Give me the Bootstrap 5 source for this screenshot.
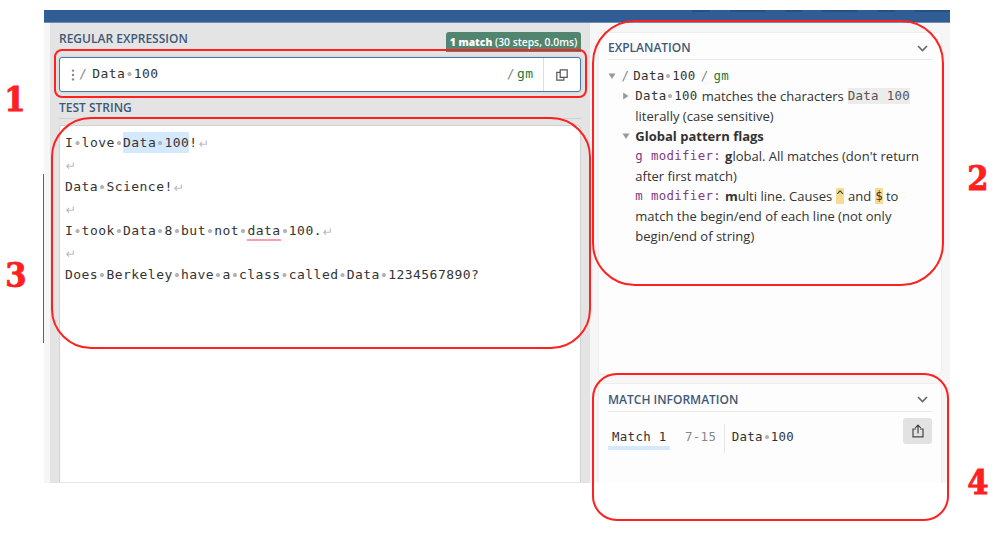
<!DOCTYPE html>
<html lang="en">
<head>
<meta charset="utf-8">
<meta name="viewport" content="width=device-width, initial-scale=1">
<title>Regular expression tester</title>
<link href="https://cdn.jsdelivr.net/npm/bootstrap@5.3.0/dist/css/bootstrap.min.css" rel="stylesheet">
<style>
body{font-family:"Open Sans",sans-serif;font-size:13.03px;line-height:20.05px;color:#333;background:#fff;height:546px;overflow:hidden}
.app{width:906px;height:473px;margin:10px 0 0 44px;background:#f6f6f6}
.topbar{height:13px;background:#2f5d94;border-bottom:1px solid #6d8db3;padding-left:648px;gap:20px}
.topbar i{height:2px;width:23px;background:#29517f}
.topbar i:nth-child(even){width:45px}
.editor{width:540px;margin-left:6px;padding:8px 9px 0 9px;background:#e4e4e4;height:460px}
.side{width:360px;padding:9px 8px 0 8px;height:460px}
.ttl{font-size:12px;font-weight:600;color:#3f5877;line-height:16px;margin:0;white-space:nowrap}
.mono{font-family:"DejaVu Sans Mono",monospace;white-space:pre}
.matches{background:#52856f;color:#fff;font-size:10.3px;font-weight:600;line-height:20px;height:20px;width:135px;border-radius:3px 3px 0 0;margin-top:1px;white-space:nowrap}
.regex{height:35px;margin-top:5px;background:#fff;border:1px solid #4a76ab;border-radius:3px;box-shadow:0 0 3px #bcc8d6}
.regex .mono{font-size:13px;letter-spacing:.45px}
.copybtn{width:37.5px;border-left:1px solid #ddd}
.dot{background:radial-gradient(circle at 50% 54%,#b5b5b5 1.7px,transparent 2.4px)}
.subject{background:#fff;border:1px solid #d2d2d2;border-bottom:0;border-radius:3px 3px 0 0;height:357px;margin-top:6px;padding:5.5px 0 0 5px;font-size:13px;letter-spacing:.455px;line-height:22.15px}
.subject div{height:22.15px}
.hit{background:#d5e9fe;display:inline-block;height:21px;line-height:22.15px;vertical-align:top}
.typo{display:inline-block;height:21px;vertical-align:top;border-bottom:2px solid #fa9db1}
.ret{width:8px;height:7px;margin-left:1px;vertical-align:0}
.panel{background:#fdfdfd;border:1px solid #eee;border-radius:4px;padding:0 9px}
.panel .mono{font-size:12.4px;letter-spacing:.335px;line-height:18px}
.phead{border-bottom:1px solid #e8e8e8}
.tree{padding-top:6px}
.tree>div{height:20.05px;white-space:nowrap}
.ind{padding-left:27.3px}
.panel .lit{background:#ececec;color:#555;height:16px;line-height:16px}
.panel .key{background:#f4dc92;height:16px;line-height:16px}
.tri{width:8px;height:8px;flex:none}
.grn,.panel .grn{color:#237a39}.pur{color:#7d3b86}.gry{color:#888}
.mtab{width:62px;height:26px;border-bottom:4px solid #d5e9fe;padding-left:4px}
.share{width:29px;height:26px;background:#e2e2e2;border-radius:3px;margin-top:-6px}
.note{position:absolute;border:2px solid #ff2020;pointer-events:none}
.num{position:absolute;font:bold 34px/36px "DejaVu Serif Condensed","DejaVu Serif",serif;font-stretch:condensed;-webkit-text-stroke:.8px #ff2020;color:#ff2020;width:24px;text-align:center}
</style>
</head>
<body class="position-relative">
<main class="app overflow-hidden">
  <div class="topbar d-flex"><i></i><i></i><i></i><i></i><i></i><i></i></div>
  <div class="d-flex">
    <section class="editor">
      <div class="d-flex justify-content-between" style="height:21px">
        <h2 class="ttl">REGULAR EXPRESSION</h2>
        <div class="matches text-center"><b>1 match</b> (30 steps, 0.0ms)</div>
      </div>
      <div class="regex d-flex align-items-stretch">
        <div class="d-flex align-items-center flex-grow-1" style="padding-left:11px">
          <svg width="4" height="12" fill="#888"><circle cx="2" cy="1.6" r="1.2"/><circle cx="2" cy="6" r="1.2"/><circle cx="2" cy="10.4" r="1.2"/></svg>
          <span class="mono gry ms-1">/</span><span class="mono" style="margin-left:5px">Data<span class="dot"> </span>100</span>
          <span class="mono gry ms-auto">/</span><span class="mono grn" style="margin:0 9px 0 2px">gm</span>
        </div>
        <div class="copybtn d-flex align-items-center justify-content-center"><svg width="12" height="12" viewBox="0 0 12 12" fill="none" stroke="#555" stroke-width="1.2"><path d="M4.2.8h7v7.6h-7z"/><path d="M4.2 3.4H.8v7.8h7V8.4"/></svg></div>
      </div>
      <h2 class="ttl" style="margin-top:8px;padding-bottom:2px;border-bottom:1px solid #d0d0d0">TEST STRING</h2>
      <div class="subject mono"><div>I<span class="dot"> </span>love<span class="dot"> </span><span class="hit">Data<span class="dot"> </span>100</span>!<svg class="ret" viewBox="0 0 8 7"><use href="#retn"/></svg></div><div><svg class="ret" viewBox="0 0 8 7"><use href="#retn"/></svg></div><div>Data<span class="dot"> </span>Science!<svg class="ret" viewBox="0 0 8 7"><use href="#retn"/></svg></div><div><svg class="ret" viewBox="0 0 8 7"><use href="#retn"/></svg></div><div>I<span class="dot"> </span>took<span class="dot"> </span>Data<span class="dot"> </span>8<span class="dot"> </span>but<span class="dot"> </span>not<span class="dot"> </span><span class="typo">data</span><span class="dot"> </span>100.<svg class="ret" viewBox="0 0 8 7"><use href="#retn"/></svg></div><div><svg class="ret" viewBox="0 0 8 7"><use href="#retn"/></svg></div><div>Does<span class="dot"> </span>Berkeley<span class="dot"> </span>have<span class="dot"> </span>a<span class="dot"> </span>class<span class="dot"> </span>called<span class="dot"> </span>Data<span class="dot"> </span>1234567890?</div></div>
    </section>
    <aside class="side">
      <section class="panel" style="height:343px">
        <div class="phead d-flex align-items-center justify-content-between" style="height:27px;padding-top:4px"><h2 class="ttl">EXPLANATION</h2><svg class="me-1" width="11" height="7" fill="none" stroke="#666" stroke-width="1.6"><path d="M1 1l4.5 4.5L10 1"/></svg></div>
        <div class="tree">
          <div class="d-flex align-items-center"><svg class="tri" fill="#999"><path d="M.5 1.5h7L4 7z"/></svg><span class="mono gry" style="margin-left:5.5px">/</span><span class="mono" style="margin-left:4px">Data<span class="dot"> </span>100</span><span class="mono gry" style="margin-left:5px">/</span><span class="mono grn" style="margin-left:5px">gm</span></div>
          <div class="d-flex align-items-center" style="padding-left:13.5px"><svg class="tri" fill="#999"><path d="M1.2.5v7L6.5 4z"/></svg><span class="mono" style="margin-left:5.8px">Data<span class="dot"> </span>100</span><span style="margin:0 4px">matches the characters</span><span class="mono lit">Data 100</span></div>
          <div class="ind">literally (case sensitive)</div>
          <div class="d-flex align-items-center" style="padding-left:13.5px"><svg class="tri" fill="#999"><path d="M.5 1.5h7L4 7z"/></svg><b style="margin-left:5.8px">Global pattern flags</b></div>
          <div class="ind d-flex align-items-center"><span class="mono pur">g modifier:</span><span style="margin-left:4px"><b>g</b>lobal. All matches (don't return</span></div>
          <div class="ind">after first match)</div>
          <div class="ind d-flex align-items-center"><span class="mono pur">m modifier:</span><span style="margin:0 4px"><b>m</b>ulti line. Causes</span><span class="mono key">^</span><span style="margin:0 4px">and</span><span class="mono key">$</span><span style="margin-left:3px">to</span></div>
          <div class="ind">match the begin/end of each line (not only</div>
          <div class="ind">begin/end of string)</div>
        </div>
      </section>
      <section class="panel" style="height:120px;margin-top:8px">
        <div class="phead d-flex align-items-center justify-content-between" style="height:28px;padding-top:4px"><h2 class="ttl">MATCH INFORMATION</h2><svg class="me-1" width="11" height="7" fill="none" stroke="#666" stroke-width="1.6"><path d="M1 1l4.5 4.5L10 1"/></svg></div>
        <div class="d-flex" style="padding-top:12px">
          <div class="mtab mono"><span class="d-block" style="padding-top:4px">Match 1</span></div>
          <div class="mono gry" style="padding:4px 7.5px 0 15px;height:29px;border-right:1px solid #e6e6e6">7-15</div>
          <div class="mono" style="padding:4px 0 0 7px">Data<span class="dot"> </span>100</div>
          <div class="share ms-auto d-flex align-items-center justify-content-center"><svg width="12" height="14" viewBox="0 0 12 14" fill="none" stroke="#444" stroke-width="1.2"><path d="M4 5H1v7.8h10V5H8M6 9.5V1.2M3.3 3.8L6 1.1l2.7 2.7"/></svg></div>
        </div>
      </section>
    </aside>
  </div>
</main>
<svg width="0" height="0" class="position-absolute"><g id="retn" fill="none" stroke="#bbb" stroke-width="1.1"><path d="M7.3.5v3.8H1M3 2L.8 4.3 3 6.5"/></g></svg>
<!-- numbered callouts over the tester -->
<div class="note" style="left:54px;top:49px;width:533px;height:49px;border-radius:8px"></div>
<div class="note" style="left:592px;top:20px;width:352px;height:266px;border-radius:43px"></div>
<div class="note" style="left:51px;top:117px;width:540px;height:232px;border-radius:40px"></div>
<div class="note" style="left:592px;top:373px;width:357px;height:148px;border-radius:25px"></div>
<div class="position-absolute" style="left:43px;top:174px;width:1px;height:169px;background:#ff2020"></div>
<div class="num" style="left:3px;top:81px">1</div>
<div class="num" style="left:966px;top:160px">2</div>
<div class="num" style="left:4px;top:257px">3</div>
<div class="num" style="left:966px;top:464px">4</div>
<script src="https://cdn.jsdelivr.net/npm/bootstrap@5.3.0/dist/js/bootstrap.bundle.min.js"></script>
</body>
</html>
